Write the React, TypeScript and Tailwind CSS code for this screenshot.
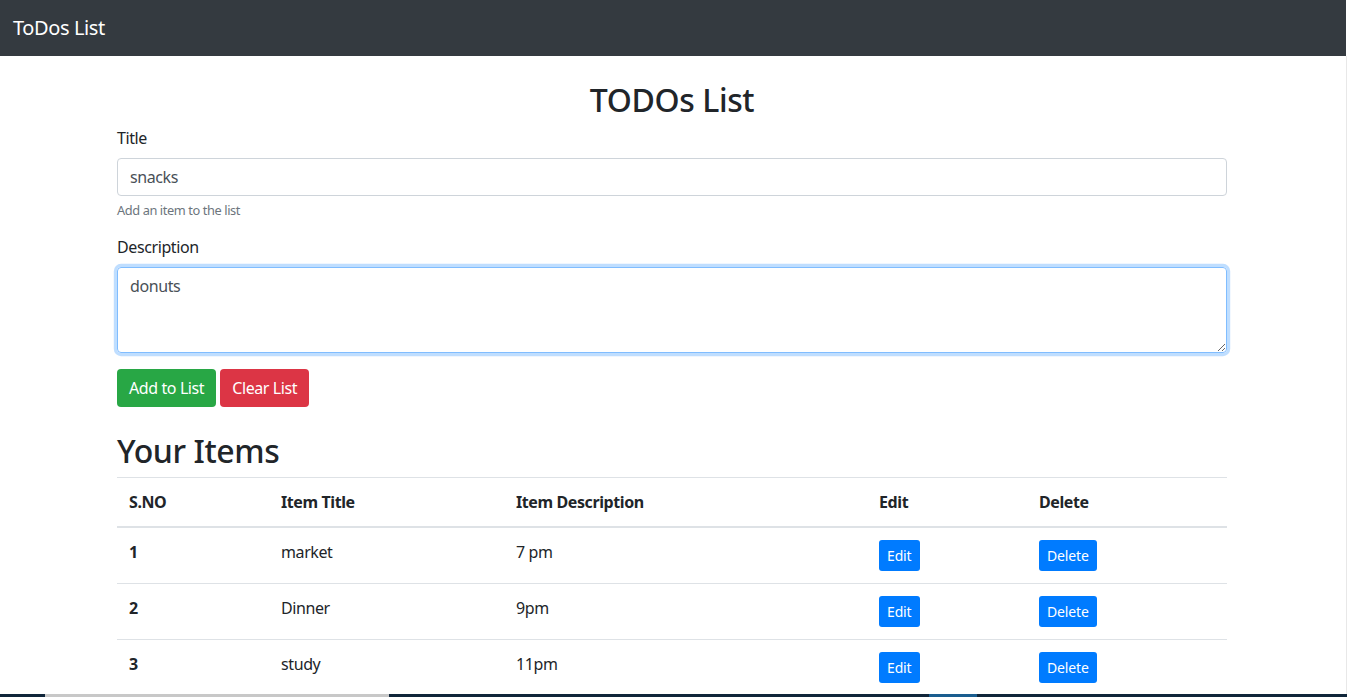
import { useState } from 'react'

const items = [
  { sno: 1, title: 'market', desc: '7 pm' },
  { sno: 2, title: 'Dinner', desc: '9pm' },
  { sno: 3, title: 'study', desc: '11pm' },
]

const font = "font-['Segoe_UI','Noto_Sans',sans-serif] tracking-[-0.025em]"

const App = () => {
  const [title, setTitle] = useState('snacks')
  const [desc, setDesc] = useState('donuts')

  return (
    <div className={`flex flex-col h-[697px] overflow-hidden bg-white text-[#212529] ${font}`}>
      <div className="flex flex-1 min-h-0">
        <div className="flex-1 min-w-0 flex flex-col">
          {/* navbar */}
          <nav className="h-[56px] shrink-0 bg-[#343a40] flex items-center px-[13px]">
            <span className="text-white text-[20px] leading-[30px]">ToDos List</span>
          </nav>

          <div className="w-[1110px] ml-[117px] mt-6">
            <h2 className="text-center text-[32px] font-medium leading-[36px] pt-[2px] mb-2">TODOs List</h2>

            <div className="mb-4">
              <label className="block text-base leading-6 mb-2">Title</label>
              <input
                value={title}
                onChange={(e) => setTitle(e.target.value)}
                className="block w-full h-[38px] px-3 border border-[#ced4da] rounded-[4px] text-base text-[#495057] outline-none"
              />
              <small className="block mt-1 pt-px text-[12.8px] leading-[19px] text-[#6c757d]">Add an item to the list</small>
            </div>

            <div className="mb-4">
              <label className="block text-base leading-6 mb-2 -mt-px">Description</label>
              <textarea
                rows={3}
                value={desc}
                onChange={(e) => setDesc(e.target.value)}
                className="block w-full h-[86px] px-3 py-[6px] border border-[#80bdff] rounded-[4px] text-base leading-6 text-[#495057] outline-none shadow-[0_0_0_3.2px_rgba(0,123,255,0.25)]"
              />
            </div>

            <div className="flex gap-1">
              <button className="h-[38px] px-3 rounded-[4px] bg-[#28a745] text-white text-base">Add to List</button>
              <button className="h-[38px] px-3 rounded-[4px] bg-[#dc3545] text-white text-base">Clear List</button>
            </div>

            <h2 className="text-[32px] font-medium leading-[36px] mt-[26px] mb-2">Your Items</h2>

            <table className="w-full border-collapse text-base leading-6">
              <thead>
                <tr className="border-t border-[#dee2e6] border-b-2">
                  <th className="w-[152px] p-3 text-left font-bold">S.NO</th>
                  <th className="w-[235px] p-3 text-left font-bold">Item Title</th>
                  <th className="w-[363px] p-3 text-left font-bold">Item Description</th>
                  <th className="w-[160px] p-3 text-left font-bold">Edit</th>
                  <th className="p-3 text-left font-bold">Delete</th>
                </tr>
              </thead>
              <tbody>
                {items.map((item) => (
                  <tr key={item.sno} className="border-t border-[#dee2e6]">
                    <th className="p-3 text-left font-bold align-top">{item.sno}</th>
                    <td className="p-3 align-top">{item.title}</td>
                    <td className="p-3 align-top">{item.desc}</td>
                    <td className="p-3 align-top">
                      <button className="h-[31px] px-2 rounded-[3px] bg-[#007bff] text-white text-sm tracking-[-0.01em]">Edit</button>
                    </td>
                    <td className="p-3 align-top">
                      <button className="h-[31px] px-2 rounded-[3px] bg-[#007bff] text-white text-sm tracking-[-0.01em]">Delete</button>
                    </td>
                  </tr>
                ))}
              </tbody>
            </table>
          </div>
        </div>
        {/* scrollbar edge */}
        <div className="w-px shrink-0 bg-[#e8e8e8] mt-[56px]" />
      </div>

      {/* taskbar edge */}
      <div className="h-[3px] shrink-0 flex bg-[#10263a]">
        <div className="w-[45px]" />
        <div className="w-[344px] bg-[#c8c8c8]" />
        <div className="w-[540px]" />
        <div className="w-[48px] bg-[#1a5d8f]" />
      </div>
    </div>
  )
}

export default App
